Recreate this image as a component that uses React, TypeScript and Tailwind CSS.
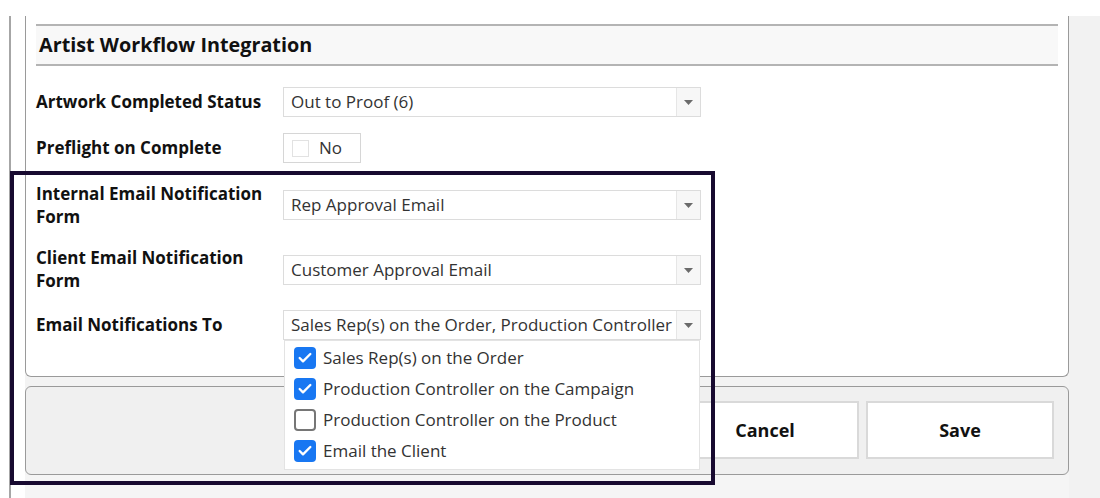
import { Check } from 'lucide-react';

const font = { fontFamily: '"Open Sans", "Noto Sans", sans-serif' };

function Select({ value }: { value: string }) {
  return (
    <div className="flex h-[30px] w-[418px] border border-[#dcdcdc] bg-white">
      <div className="flex-1 min-w-0 flex items-center pl-[7px] text-[17px] text-[#333] whitespace-nowrap overflow-hidden">
        {value}
      </div>
      <div className="w-[24px] flex items-center justify-center border-l border-[#e6e6e6] bg-[#f7f7f7]">
        <svg width="9" height="5" viewBox="0 0 9 5">
          <path d="M0 0h9L4.5 5z" fill="#6b6b6b" />
        </svg>
      </div>
    </div>
  );
}

function Option({ label, checked }: { label: string; checked: boolean }) {
  return (
    <div className="flex items-center h-[31px] pl-[9px] gap-[7px] text-[17px] text-[#333]">
      {checked ? (
        <span className="w-[22px] h-[22px] rounded-[4px] bg-[#1877f2] flex items-center justify-center">
          <Check size={16} strokeWidth={3.5} color="white" />
        </span>
      ) : (
        <span className="w-[22px] h-[22px] rounded-[4px] border-2 border-[#767676] bg-white" />
      )}
      <span>{label}</span>
    </div>
  );
}

export default function App() {
  return (
    <div className="relative w-[1100px] h-[498px] bg-white overflow-hidden" style={font}>
      <div className="h-[16px]" />
      <div className="flex h-[482px]">
        <div className="w-[9px] bg-white" />
        <div className="w-[2px] bg-[#a6a6a6]" />
        <div className="w-[14px] bg-white" />
        <div className="w-[1044px] flex flex-col bg-[#f3f3f3]">
          {/* form panel */}
          <div className="h-[361px] bg-white border border-t-0 border-[#9a9a9a] rounded-b-[6px] px-[10px] pt-[8px]">
            <div className="h-[42px] bg-[#f8f8f8] border-y-2 border-[#b4b4b4] flex items-center pl-[3px] text-[19.8px] font-bold text-[#111]">
              Artist Workflow Integration
            </div>

            <div className="flex items-center h-[30px] mt-[21px]">
              <div className="w-[247px] text-[17px] font-bold text-[#111]">Artwork Completed Status</div>
              <Select value="Out to Proof (6)" />
            </div>

            <div className="flex items-center h-[30px] mt-[16px]">
              <div className="w-[247px] text-[17px] font-bold text-[#111]">Preflight on Complete</div>
              <div className="h-[30px] w-[78px] border border-[#d6d6d6] flex items-center pl-[8px] gap-[10px] text-[17px] text-[#333]">
                <span className="w-[17px] h-[17px] border border-[#e2e2e2] bg-white" />
                No
              </div>
            </div>

            <div className="flex items-start h-[46px] mt-[19px]">
              <div className="w-[247px] text-[17px] font-bold text-[#111] leading-[23px]">
                Internal Email Notification
                <br />
                Form
              </div>
              <div className="mt-[8px]">
                <Select value="Rep Approval Email" />
              </div>
            </div>

            <div className="flex items-start h-[46px] mt-[18px]">
              <div className="w-[247px] text-[17px] font-bold text-[#111] leading-[23px]">
                Client Email Notification
                <br />
                Form
              </div>
              <div className="mt-[9px]">
                <Select value="Customer Approval Email" />
              </div>
            </div>

            <div className="flex items-center h-[30px] mt-[18px]">
              <div className="w-[247px] text-[17px] font-bold text-[#111]">Email Notifications To</div>
              <div className="relative z-10">
                <Select value="Sales Rep(s) on the Order, Production Controller" />
                <div className="absolute left-px top-[30px] w-[416px] h-[130px] bg-white border border-[#e3e3e3] pt-px">
                  <Option label="Sales Rep(s) on the Order" checked />
                  <Option label="Production Controller on the Campaign" checked />
                  <Option label="Production Controller on the Product" checked={false} />
                  <Option label="Email the Client" checked />
                </div>
              </div>
            </div>
          </div>

          {/* footer */}
          <div className="mt-[9px] h-[89px] bg-[#f0f0f0] border border-[#9a9a9a] rounded-[6px] flex justify-end items-start gap-[7px] pt-[14px] pr-[14px]">
            <button className="w-[188px] h-[58px] bg-white border-2 border-[#d9d9d9] text-[18px] font-bold text-[#111]">
              Cancel
            </button>
            <button className="w-[188px] h-[58px] bg-white border-2 border-[#d9d9d9] text-[18px] font-bold text-[#111]">
              Save
            </button>
          </div>
          <div className="flex-1 bg-[#f5f5f5]" />
        </div>
        <div className="flex-1 bg-[#f2f2f2]" />
      </div>

      {/* highlight frame */}
      <div className="absolute left-[10px] top-[171px] w-[705px] h-[314px] border-[4px] border-[#180a30] z-20 pointer-events-none" />
    </div>
  );
}
